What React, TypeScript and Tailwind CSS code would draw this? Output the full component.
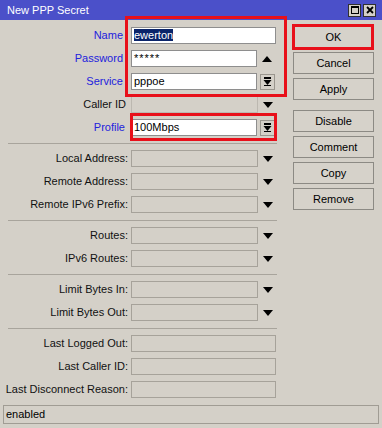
import React from "react";

const DownArrow = () => (
  <svg width="10" height="6" viewBox="0 0 10 6">
    <polygon points="0,0 10,0 5,6" fill="#000" />
  </svg>
);

const UpArrow = () => (
  <svg width="10" height="6" viewBox="0 0 10 6">
    <polygon points="0,6 10,6 5,0" fill="#000" />
  </svg>
);

const DropBtn = () => (
  <div className="ml-[3px] w-[15px] h-[16px] border border-[#9a968e] bg-[#d4d0c8] flex items-center justify-center">
    <svg width="9" height="9" viewBox="0 0 9 9">
      <rect x="1" y="0" width="7" height="2" fill="#000" />
      <polygon points="0.5,3 8.5,3 4.5,8" fill="#000" />
      <rect x="1" y="8" width="7" height="1" fill="#000" />
    </svg>
  </div>
);

type RowProps = { label: string; blue?: boolean; pad?: string; children: React.ReactNode };
const Row = ({ label, blue, pad = "", children }: RowProps) => (
  <div className="flex items-center h-[17px]">
    <span
      className={`w-[128px] shrink-0 text-right whitespace-nowrap text-[11px] leading-[17px] ${pad} ${
        blue ? "text-[#2222dd]" : "text-[#111111]"
      }`}
    >
      {label}
    </span>
    <div className="ml-[3px] flex items-center">{children}</div>
  </div>
);

const WhiteInput = ({ w, children }: { w: string; children?: React.ReactNode }) => (
  <div className={`${w} h-[17px] border border-[#8e8e8e] bg-white text-[11px] leading-[15px] pl-[2px] text-black`}>
    {children}
  </div>
);

const GrayInput = ({ w }: { w: string }) => (
  <div className={`${w} h-[17px] border border-[#a6a29a] bg-[#d4d0c8]`} />
);

const Trail = ({ children }: { children?: React.ReactNode }) => (
  <div className="w-[19px] flex items-center justify-center">{children}</div>
);

const Sep = () => <div className="ml-[8px] w-[269px] h-px bg-[#a8a49c] mt-[7px] mb-[6px]" />;

const Btn = ({ label, className = "" }: { label: string; className?: string }) => (
  <div
    className={`w-[81px] h-[22px] border border-[#8c8a84] bg-[#d6d2ca] flex items-center justify-center text-[11px] text-black ${className}`}
  >
    {label}
  </div>
);

export default function App() {
  return (
    <div className="relative w-[382px] h-[428px] bg-[#d4d0c8] overflow-hidden font-['Liberation_Sans',Arial,sans-serif] flex flex-col">
      {/* Title bar */}
      <div className="h-[20px] bg-[#4b50c9] flex items-center justify-between pl-[7px] pr-[6px]">
        <span className="text-white text-[11px] leading-[20px]">New PPP Secret</span>
        <div className="flex gap-[2px]">
          <div className="w-[13px] h-[13px] bg-[#d4d0c8] border border-[#303030] flex items-center justify-center">
            <div className="w-[8px] h-[8px] border border-black border-t-2" />
          </div>
          <div className="w-[13px] h-[13px] bg-[#d4d0c8] border border-[#303030] flex items-center justify-center">
            <svg width="8" height="8" viewBox="0 0 8 8">
              <path d="M1 1 L7 7 M7 1 L1 7" stroke="#000" strokeWidth="1.8" />
            </svg>
          </div>
        </div>
      </div>

      <div className="flex">
        {/* Form column */}
        <div className="w-[290px] pt-[7px] flex flex-col">
          <div className="flex flex-col gap-[6px]">
            <Row label="Name" blue pad="pr-[5px]">
              <WhiteInput w="w-[145px]">
                <span className="bg-[#0a246a] text-white">ewerton</span>
              </WhiteInput>
            </Row>
            <Row label="Password" blue pad="pr-[5px]">
              <WhiteInput w="w-[126px]">
                <span className="tracking-[1px]">*****</span>
              </WhiteInput>
              <Trail>
                <UpArrow />
              </Trail>
            </Row>
            <Row label="Service" blue pad="pr-[5px]">
              <WhiteInput w="w-[126px]">pppoe</WhiteInput>
              <DropBtn />
            </Row>
            <Row label="Caller ID" pad="pr-[2px]">
              <div className="w-[127px] h-[17px] border border-[#bcb8b0] bg-[#d4d0c8]" />
              <Trail>
                <DownArrow />
              </Trail>
            </Row>
            <Row label="Profile" blue pad="pr-[3px]">
              <WhiteInput w="w-[126px]">100Mbps</WhiteInput>
              <DropBtn />
            </Row>
          </div>
          <Sep />
          <div className="flex flex-col gap-[6px]">
            <Row label="Local Address:">
              <GrayInput w="w-[127px]" />
              <Trail>
                <DownArrow />
              </Trail>
            </Row>
            <Row label="Remote Address:">
              <GrayInput w="w-[127px]" />
              <Trail>
                <DownArrow />
              </Trail>
            </Row>
            <Row label="Remote IPv6 Prefix:">
              <GrayInput w="w-[127px]" />
              <Trail>
                <DownArrow />
              </Trail>
            </Row>
          </div>
          <Sep />
          <div className="flex flex-col gap-[6px]">
            <Row label="Routes:">
              <GrayInput w="w-[127px]" />
              <Trail>
                <DownArrow />
              </Trail>
            </Row>
            <Row label="IPv6 Routes:">
              <GrayInput w="w-[127px]" />
              <Trail>
                <DownArrow />
              </Trail>
            </Row>
          </div>
          <Sep />
          <div className="flex flex-col gap-[6px]">
            <Row label="Limit Bytes In:">
              <GrayInput w="w-[127px]" />
              <Trail>
                <DownArrow />
              </Trail>
            </Row>
            <Row label="Limit Bytes Out:">
              <GrayInput w="w-[127px]" />
              <Trail>
                <DownArrow />
              </Trail>
            </Row>
          </div>
          <Sep />
          <div className="flex flex-col gap-[6px]">
            <Row label="Last Logged Out:">
              <GrayInput w="w-[145px]" />
            </Row>
            <Row label="Last Caller ID:">
              <GrayInput w="w-[145px]" />
            </Row>
            <Row label="Last Disconnect Reason:">
              <GrayInput w="w-[145px]" />
            </Row>
          </div>
        </div>

        {/* Buttons column */}
        <div className="ml-[3px] pt-[6px] flex flex-col gap-[4px]">
          <Btn label="OK" />
          <Btn label="Cancel" />
          <Btn label="Apply" />
          <Btn label="Disable" className="mt-[6px]" />
          <Btn label="Comment" />
          <Btn label="Copy" />
          <Btn label="Remove" />
        </div>
      </div>

      {/* Status bar */}
      <div className="mt-[7px] ml-[3px] w-[376px] h-[19px] border border-[#a09c94] text-[11px] leading-[17px] pl-[2px] text-black">
        enabled
      </div>

      {/* Red highlight overlays */}
      <div className="absolute left-[125px] top-[16px] w-[162px] h-[81px] border-[3px] border-[#e8101a]" />
      <div className="absolute left-[130px] top-[113px] w-[147px] h-[28px] border-[3px] border-[#e8101a]" />
      <div className="absolute left-[292px] top-[24px] w-[82px] h-[26px] border-[3px] border-[#e8101a]" />
    </div>
  );
}
